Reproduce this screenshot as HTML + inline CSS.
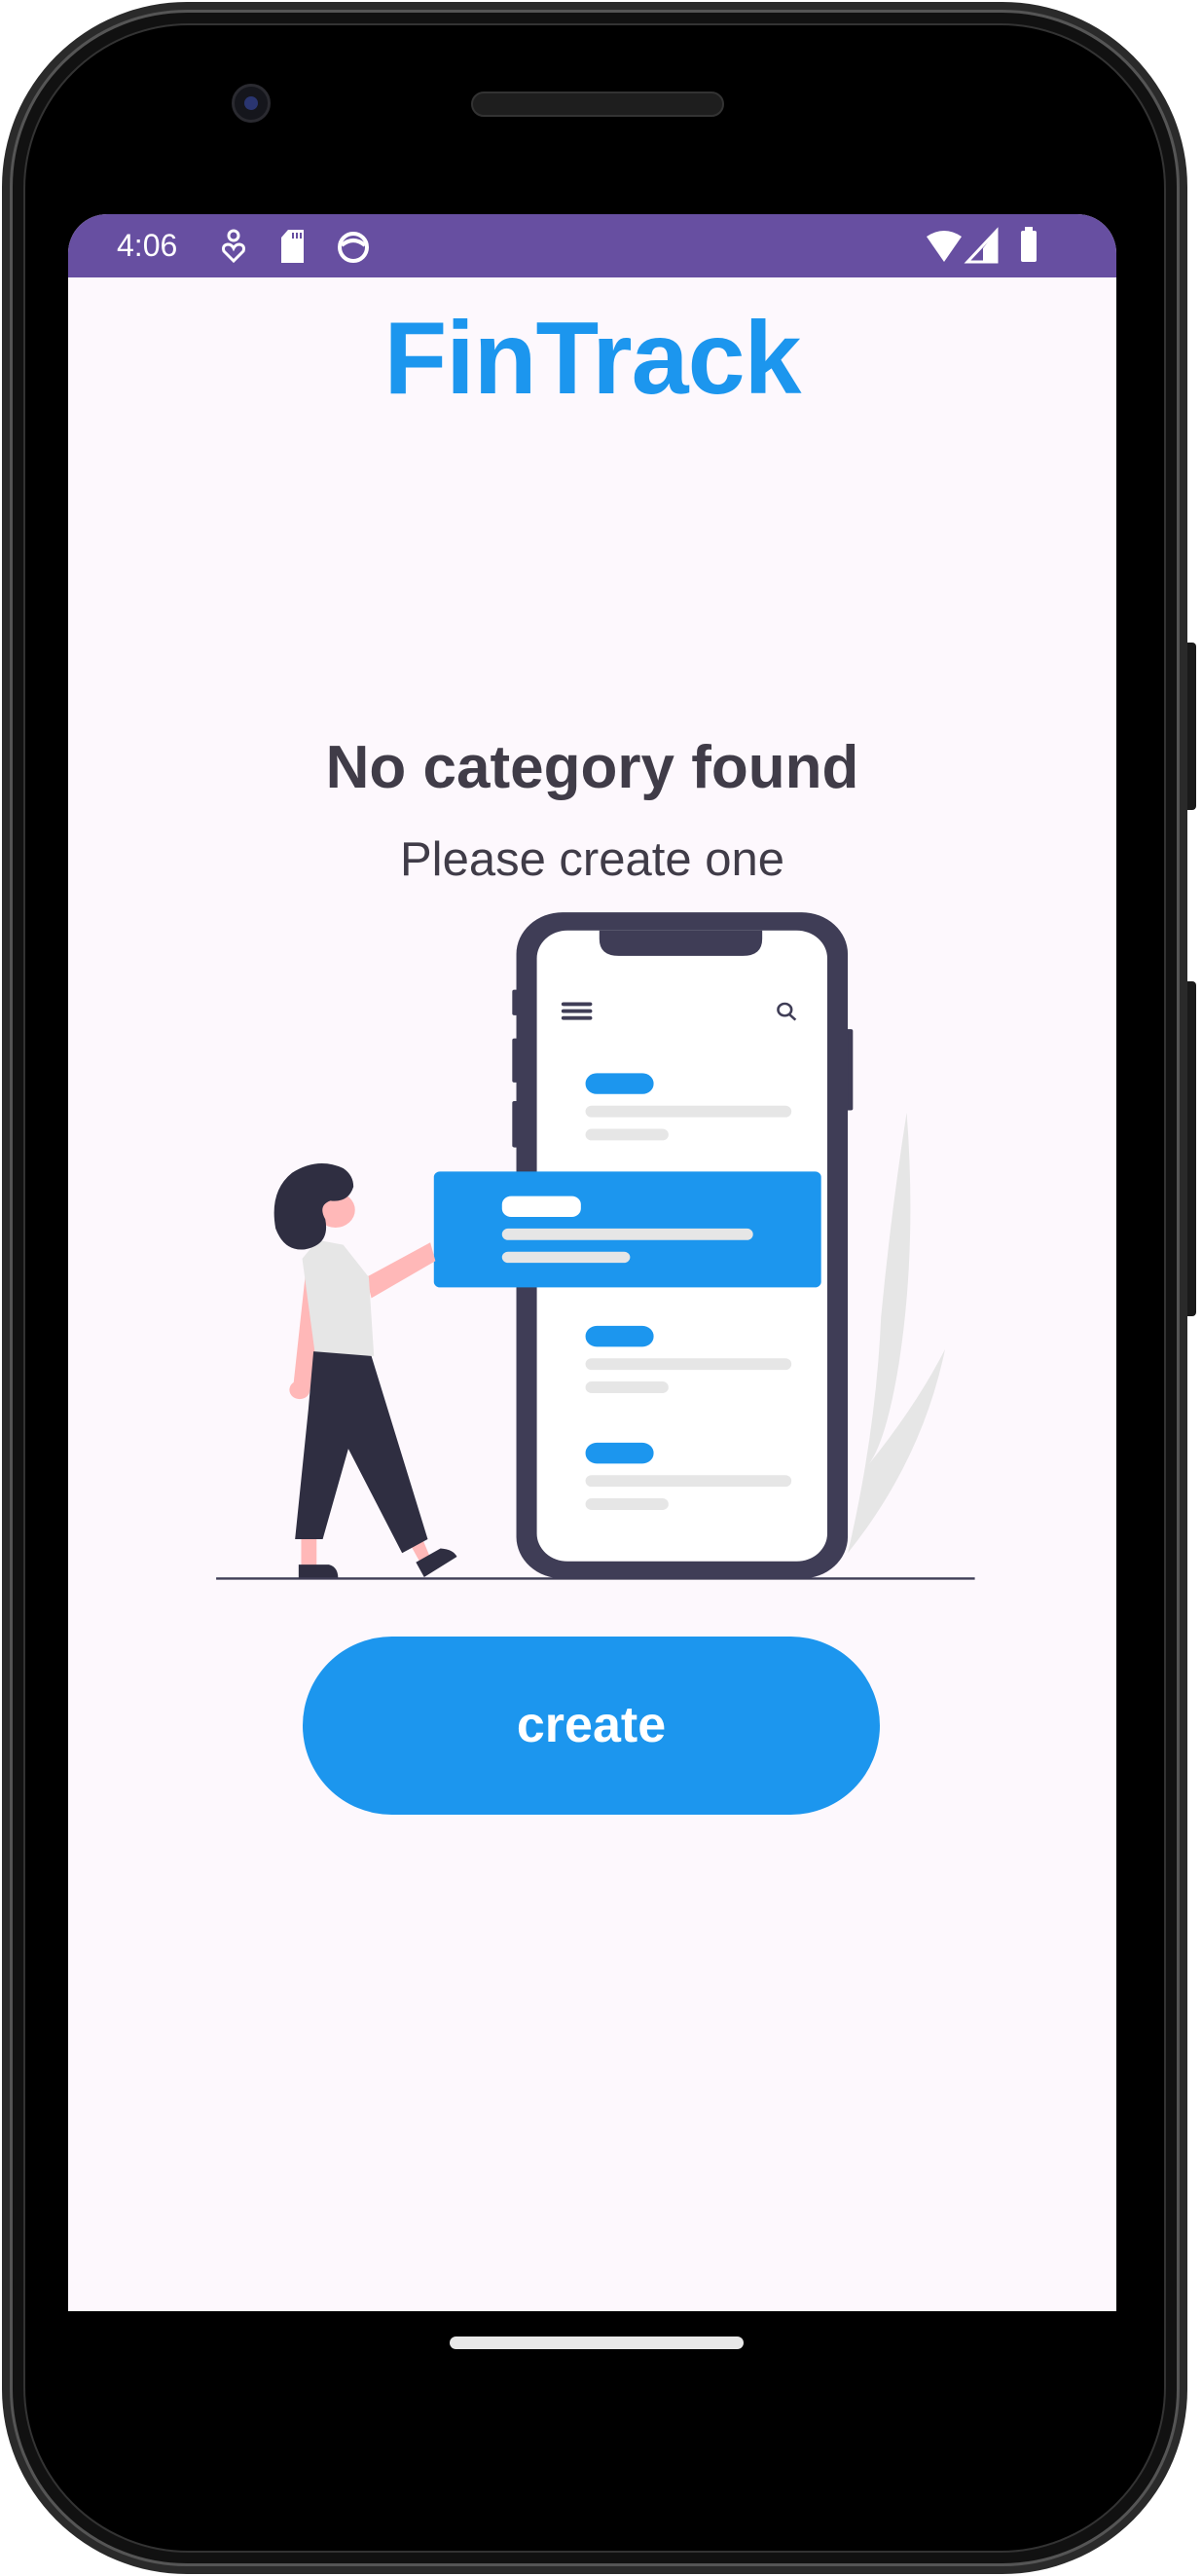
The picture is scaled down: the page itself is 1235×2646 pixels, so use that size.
<!DOCTYPE html>
<html><head><meta charset="utf-8"><style>
*{margin:0;padding:0;box-sizing:border-box}
html,body{width:1235px;height:2646px;background:#fff;overflow:hidden;position:relative;font-family:"Liberation Sans",sans-serif}
.abs{position:absolute}
</style></head><body>
<div class="abs" style="left:1210px;top:660px;width:19px;height:172px;background:#1a1a1a;border-radius:4px"></div>
<div class="abs" style="left:1210px;top:1008px;width:19px;height:344px;background:#1a1a1a;border-radius:4px"></div>
<div class="abs" style="left:2px;top:2px;width:1218px;height:2642px;border-radius:190px;background:#2a2a2a"></div>
<div class="abs" style="left:10px;top:10px;width:1202px;height:2626px;border-radius:182px;background:#111;border:3px solid #555"></div>
<div class="abs" style="left:24px;top:24px;width:1174px;height:2598px;border-radius:170px;background:#000;border:2px solid #333"></div>
<div class="abs" style="left:238px;top:86px;width:40px;height:40px;border-radius:50%;background:#15161c;border:3px solid #2a2a30"></div>
<div class="abs" style="left:251px;top:99px;width:14px;height:14px;border-radius:50%;background:#2a3570"></div>
<div class="abs" style="left:484px;top:94px;width:260px;height:26px;border-radius:13px;background:#1e1e1e;border:2px solid #333"></div>
<div class="abs" style="left:70px;top:220px;width:1077px;height:2154px;background:#fdf8fd;border-radius:40px 40px 0 0;overflow:hidden">
  <div class="abs" style="left:0;top:0;width:1077px;height:65px;background:#674fa1"></div>
  <div class="abs" style="left:50px;top:14px;color:#fff;font-size:32px">4:06</div>
  <svg class="abs" style="left:150px;top:14px" width="180" height="40" viewBox="0 0 180 40">
    <circle cx="20" cy="8" r="5" fill="none" stroke="#fff" stroke-width="3"/>
    <path d="M20 34 L10 24 Q8 18 14 17 Q18 17 20 21 Q22 17 26 17 Q32 18 30 24 Z" fill="none" stroke="#fff" stroke-width="3"/>
    <path d="M76 2 H92 V36 H69 V10 Z" fill="#fff"/>
    <rect x="80" y="5" width="2" height="6" fill="#674fa1"/><rect x="84" y="5" width="2" height="6" fill="#674fa1"/><rect x="88" y="5" width="2" height="6" fill="#674fa1"/>
    <circle cx="143" cy="20" r="14" fill="none" stroke="#fff" stroke-width="4"/>
    <path d="M131 18 Q143 8 155 18" stroke="#fff" stroke-width="4" fill="none"/>
  </svg>
  <svg class="abs" style="left:880px;top:13px" width="140" height="40" viewBox="0 0 140 40">
    <path d="M2 10 Q20 -2 38 10 L20 36 Z" fill="#fff"/>
    <path d="M74 4 V36 H44 Z" fill="none" stroke="#fff" stroke-width="3"/>
    <path d="M60 22 V36 H74 V4 Z" fill="#fff"/>
    <rect x="99" y="4" width="16" height="32" rx="2" fill="#fff"/><rect x="103" y="0" width="8" height="5" fill="#fff"/>
  </svg>
  <div class="abs" style="left:0;width:1077px;top:88px;text-align:center;color:#1c96ee;font-weight:bold;font-size:106px;letter-spacing:-1px;line-height:120px">FinTrack</div>
  <div class="abs" style="left:0;width:1077px;top:529px;text-align:center;color:#403c48;font-weight:bold;font-size:62px;line-height:80px">No category found</div>
  <div class="abs" style="left:0;width:1077px;top:633px;text-align:center;color:#403c48;font-size:49px;line-height:60px">Please create one</div>
  <div class="abs" style="left:241px;top:1461px;width:593px;height:183px;border-radius:92px;background:#1c96ee;color:#fff;font-weight:bold;font-size:52px;line-height:183px;text-align:center">create</div>
</div>
<svg class="abs" style="left:200px;top:900px" width="820" height="750" viewBox="0 0 1558 1575" preserveAspectRatio="none">
  <path d="M1275 1460 Q1330 1200 1340 950 Q1360 720 1390 510 Q1410 800 1375 1050 Q1350 1220 1315 1270 Q1410 1140 1465 1020 Q1420 1260 1275 1460 Z" fill="#e6e6e6"/>
  <rect x="620" y="245" width="12" height="55" rx="4" fill="#3f3d56"/>
  <rect x="620" y="350" width="12" height="95" rx="4" fill="#3f3d56"/>
  <rect x="620" y="485" width="12" height="100" rx="4" fill="#3f3d56"/>
  <rect x="1270" y="330" width="15" height="175" rx="4" fill="#3f3d56"/>
  <rect x="628" y="78" width="647" height="1437" rx="90" fill="#3f3d56"/>
  <rect x="668" y="117" width="567" height="1361" rx="60" fill="#fff"/>
  <path d="M790 117 H1108 V135 Q1108 172 1070 172 H828 Q790 172 790 135 Z" fill="#3f3d56"/>
  <g stroke="#3f3d56" stroke-width="8" stroke-linecap="round"><line x1="720" y1="276" x2="772" y2="276"/><line x1="720" y1="291" x2="772" y2="291"/><line x1="720" y1="306" x2="772" y2="306"/></g>
  <circle cx="1152" cy="288" r="13" fill="none" stroke="#3f3d56" stroke-width="5"/>
  <line x1="1161" y1="298" x2="1173" y2="310" stroke="#3f3d56" stroke-width="5"/>
  <g>
    <rect x="763" y="425" width="133" height="45" rx="22" fill="#1c96ee"/>
    <rect x="763" y="495" width="402" height="25" rx="12" fill="#e6e6e6"/>
    <rect x="763" y="545" width="162" height="25" rx="12" fill="#e6e6e6"/>
    <rect x="763" y="970" width="133" height="45" rx="22" fill="#1c96ee"/>
    <rect x="763" y="1040" width="402" height="25" rx="12" fill="#e6e6e6"/>
    <rect x="763" y="1090" width="162" height="25" rx="12" fill="#e6e6e6"/>
    <rect x="763" y="1222" width="133" height="45" rx="22" fill="#1c96ee"/>
    <rect x="763" y="1292" width="402" height="25" rx="12" fill="#e6e6e6"/>
    <rect x="763" y="1342" width="162" height="25" rx="12" fill="#e6e6e6"/>
  </g>
  <rect x="467" y="637" width="756" height="250" rx="12" fill="#1c96ee"/>
  <rect x="600" y="690" width="154" height="45" rx="18" fill="#fff"/>
  <rect x="600" y="760" width="490" height="25" rx="12" fill="#e6e6e6"/>
  <rect x="600" y="810" width="250" height="24" rx="12" fill="#e6e6e6"/>
  <path d="M335 865 L460 790 L470 830 L345 910 Z" fill="#ffb8b8"/>
  <path d="M220 820 L262 840 L225 1110 L192 1105 Z" fill="#ffb8b8"/>
  <circle cx="205" cy="1108" r="20" fill="#ffb8b8"/>
  <rect x="208" y="1420" width="30" height="70" fill="#ffb8b8"/>
  <path d="M420 1440 L445 1430 L460 1470 L440 1480 Z" fill="#ffb8b8"/>
  <path d="M210 825 L240 785 L290 795 L340 865 L350 1035 L235 1030 Z" fill="#e6e6e6"/>
  <path d="M232 1025 L345 1035 L455 1430 L405 1460 L300 1235 L250 1430 L196 1430 L222 1150 Z" fill="#2f2e41"/>
  <path d="M203 1485 H262 Q280 1490 280 1515 H203 Z" fill="#2f2e41"/>
  <path d="M432 1480 L480 1450 Q505 1452 512 1468 L448 1512 Z" fill="#2f2e41"/>
  <circle cx="275" cy="720" r="38" fill="#ffb8b8"/>
  <path d="M290 630 Q240 605 190 640 Q145 680 158 760 Q175 810 215 805 Q265 795 255 740 Q240 710 265 700 Q300 705 310 670 Q310 645 290 630 Z" fill="#2f2e41"/>
  <line x1="42" y1="1515" x2="1523" y2="1515" stroke="#3f3d56" stroke-width="5"/>
</svg>
<div class="abs" style="left:462px;top:2400px;width:302px;height:13px;border-radius:7px;background:#e8e8e8"></div>
</body></html>
